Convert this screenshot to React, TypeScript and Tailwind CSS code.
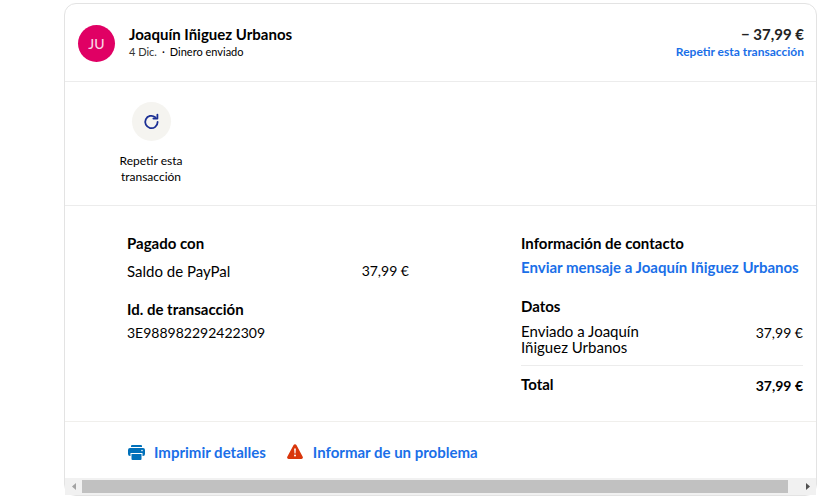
import type { ReactNode } from "react";

const contact = "Joaquín Iñiguez Urbanos";

export default function App() {
  return (
    <main className="bg-white pt-[3px] pb-2 pl-16 pr-[23px] font-['Lato','Noto_Sans',sans-serif] text-[15px] leading-5 text-black">
      <article className="rounded-xl border border-[#e3e3e3]">
        {/* Cabecera */}
        <header className="flex items-start justify-between border-b border-[#ececec] pt-5 pr-3 pb-[19px] pl-[13px]">
          <div className="flex gap-[14px]">
            <div className="mt-px flex size-[37px] items-center justify-center rounded-full bg-[#e00064] text-sm font-medium text-[#f9d3e4]">
              JU
            </div>
            <div>
              <h1 className="font-bold">{contact}</h1>
              <p className="text-[11px] leading-4">
                <span className="text-[#333]">4 Dic.</span>
                <span className="mx-[5px]">·</span>
                Dinero enviado
              </p>
            </div>
          </div>
          <div className="text-right">
            <p className="font-bold text-[#222]">− 37,99 €</p>
            <a href="#repetir" className="block text-xs leading-4 font-bold text-[#1a6fe8]">
              Repetir esta transacción
            </a>
          </div>
        </header>

        {/* Acciones */}
        <section className="border-b border-[#ececec] py-5 pl-[46px]">
          <button type="button" className="flex w-20 flex-col items-center gap-3 text-xs leading-4">
            <span className="flex size-[39px] items-center justify-center rounded-full bg-[#f5f4f0]">
              <RepeatIcon className="size-[17px] text-[#1b2f94]" />
            </span>
            <span>Repetir esta transacción</span>
          </button>
        </section>

        {/* Detalles */}
        <section className="flex justify-between border-b border-[#f0efec] pt-[27px] pr-[13px] pb-[23px] pl-[62px]">
          <div className="w-[282px]">
            <Heading>Pagado con</Heading>
            <div className="mt-2 flex justify-between">
              <span>Saldo de PayPal</span>
              <span className="text-sm leading-5">37,99 €</span>
            </div>
            <div className="mt-[18px]">
              <Heading>Id. de transacción</Heading>
            </div>
            <p className="mt-1 text-sm leading-5">3E988982292422309</p>
          </div>

          <div className="w-[282px]">
            <Heading>Información de contacto</Heading>
            <a href="#mensaje" className="mt-1 block font-bold whitespace-nowrap text-[#1a6fe8]">
              {`Enviar mensaje a ${contact}`}
            </a>
            <div className="mt-[19px]">
              <Heading>Datos</Heading>
            </div>
            <div className="mt-[7px] flex items-start justify-between border-b border-[#ececec] pb-[10px]">
              <p className="w-32 leading-4">{`Enviado a ${contact}`}</p>
              <span className="text-sm leading-5">37,99 €</span>
            </div>
            <div className="mt-2 flex justify-between font-bold">
              <span>Total</span>
              <span className="text-sm leading-6">37,99 €</span>
            </div>
          </div>
        </section>

        {/* Pie */}
        <footer className="flex gap-[21px] pt-5 pb-4 pl-[63px] font-bold text-[#1a6fe8]">
          <a href="#imprimir" className="flex items-center gap-[9px]">
            <PrinterIcon className="size-[17px] text-[#0070ba]" />
            Imprimir detalles
          </a>
          <a href="#problema" className="flex items-center gap-[10px]">
            <WarningIcon className="size-4 text-[#d9360b]" />
            Informar de un problema
          </a>
        </footer>

        {/* Barra de desplazamiento */}
        <div className="flex h-[17px] items-center bg-[#f1f1f1]">
          <button type="button" aria-label="Desplazar a la izquierda" className="flex w-[17px] justify-center">
            <svg className="h-[7px] w-1 text-[#a3a3a3]" viewBox="0 0 4 7" fill="currentColor">
              <path d="M4 0v7L0 3.5z" />
            </svg>
          </button>
          <div className="mr-[11px] h-[13px] flex-1 bg-[#c1c1c1]" />
          <button type="button" aria-label="Desplazar a la derecha" className="flex w-[17px] justify-center">
            <svg className="h-[7px] w-1 text-[#505050]" viewBox="0 0 4 7" fill="currentColor">
              <path d="M0 0v7l4-3.5z" />
            </svg>
          </button>
        </div>
      </article>
    </main>
  );
}

function Heading({ children }: { children: ReactNode }) {
  return <h2 className="font-bold">{children}</h2>;
}

// Iconos
function RepeatIcon({ className }: { className?: string }) {
  return (
    <svg className={className} fill="none" stroke="currentColor" strokeWidth={1.8} viewBox="0 0 17 17">
      <path strokeLinecap="round" d="M14.6 9A6.2 6.2 0 1 1 12.2 4.1" />
      <path strokeLinecap="round" strokeLinejoin="round" d="M14.4 1.6v3.9h-4" />
    </svg>
  );
}

function PrinterIcon({ className }: { className?: string }) {
  return (
    <svg className={className} fill="currentColor" viewBox="0 0 17 17">
      <path d="M4 1h9a1 1 0 0 1 1 1v1H3V2a1 1 0 0 1 1-1z" />
      <path
        fillRule="evenodd"
        d="M2 4h13a2 2 0 0 1 2 2v4a2 2 0 0 1-2 2h-.5V9h-12v3H2a2 2 0 0 1-2-2V6a2 2 0 0 1 2-2zm12 1.8a.8.8 0 1 0 0 1.6.8.8 0 0 0 0-1.6z"
      />
      <path d="M3.5 10h10v5a1 1 0 0 1-1 1h-8a1 1 0 0 1-1-1z" />
    </svg>
  );
}

function WarningIcon({ className }: { className?: string }) {
  return (
    <svg className={className} viewBox="0 0 16 16">
      <path
        fill="currentColor"
        d="M6.6 1a1.6 1.6 0 0 1 2.8 0l6.3 11.7a1.6 1.6 0 0 1-1.4 2.3H1.7a1.6 1.6 0 0 1-1.4-2.3z"
      />
      <path fill="#fff" d="M7.1 4.6h1.8l-.4 4.8h-1z" />
      <circle cx="8" cy="11.4" r="1" fill="#fff" />
    </svg>
  );
}
